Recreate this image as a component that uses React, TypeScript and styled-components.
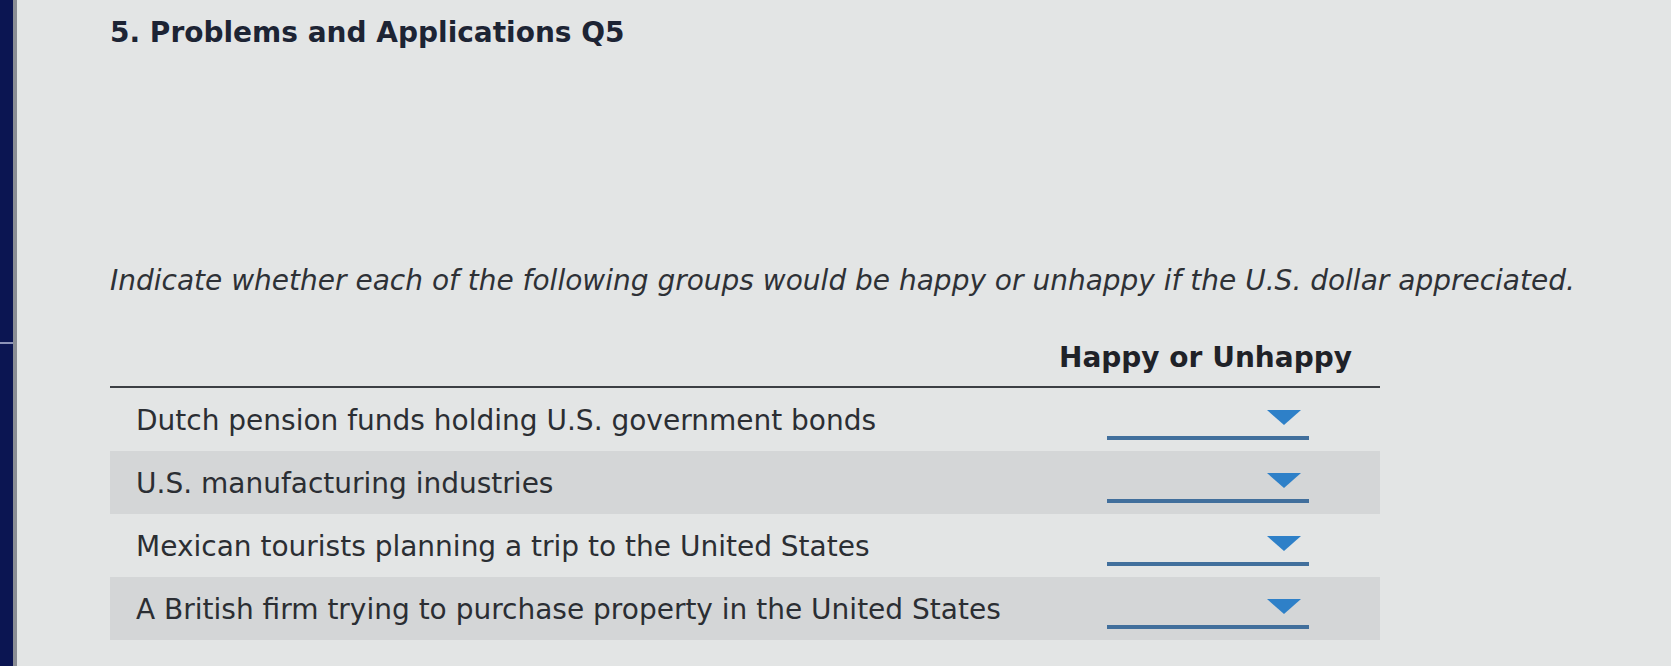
import styled, { createGlobalStyle } from "styled-components"

const GlobalStyle = createGlobalStyle`
  html, body {
    margin: 0;
    padding: 0;
    background: #e3e5e5;
  }
  body {
    font-family: "DejaVu Sans", Verdana, sans-serif;
    color: #2b2e33;
  }
`

const groups = [
  "Dutch pension funds holding U.S. government bonds",
  "U.S. manufacturing industries",
  "Mexican tourists planning a trip to the United States",
  "A British firm trying to purchase property in the United States",
]

const Arrow = () => (
  <svg width="34" height="15" viewBox="0 0 34 15">
    <polygon points="0,0 34,0 17,15" fill="#2e80c8" />
  </svg>
)

export const App = () => {
  return (
    <Page>
      <GlobalStyle />
      <SideBar />
      <Main>
        <Title>5. Problems and Applications Q5</Title>
        <Prompt>
          Indicate whether each of the following groups would be happy or unhappy if the U.S. dollar appreciated.
        </Prompt>
        <Table>
          <HeaderRow>
            <HeaderLabel>Happy or Unhappy</HeaderLabel>
          </HeaderRow>
          {groups.map((g, idx) => (
            <Row key={idx} shaded={idx % 2 === 1}>
              <RowLabel>{g}</RowLabel>
              <Dropdown>
                <ArrowWrap>
                  <Arrow />
                </ArrowWrap>
                <Underline />
              </Dropdown>
            </Row>
          ))}
        </Table>
      </Main>
    </Page>
  )
}
export default App

const Page = styled.div`
  display: flex;
  width: 100%;
  min-height: 666px;
  background: #e3e5e5;
`
const SideBar = styled.div`
  position: relative;
  width: 13px;
  flex-shrink: 0;
  background: #0b1552;
  border-right: 4px solid #8a8d94;

  &::after {
    content: "";
    position: absolute;
    left: 0;
    top: 342px;
    width: 13px;
    height: 2px;
    background: #8d93b8;
  }
`
const Main = styled.div`
  display: flex;
  flex-direction: column;
  padding: 16px 0 0 93px;
`
const Title = styled.h1`
  margin: 0;
  font-size: 28px;
  line-height: 34px;
  font-weight: bold;
  color: #1d2434;
`
const Prompt = styled.p`
  margin: 214px 0 0;
  font-size: 28px;
  line-height: 34px;
  font-style: italic;
  color: #2e3136;
`
const Table = styled.div`
  display: flex;
  flex-direction: column;
  width: 1270px;
  margin-top: 28px;
`
const HeaderRow = styled.div`
  display: flex;
  justify-content: flex-end;
  align-items: flex-end;
  height: 62px;
  box-sizing: border-box;
  padding: 0 28px 11px 0;
  border-bottom: 2px solid #3c3f44;
`
const HeaderLabel = styled.div`
  font-size: 28px;
  line-height: 34px;
  font-weight: bold;
  color: #1f2228;
`
const Row = styled.div<{ shaded?: boolean }>`
  display: grid;
  grid-template-columns: 1fr 202px;
  align-items: center;
  height: 63px;
  box-sizing: border-box;
  padding: 2px 71px 0 26px;
  background: ${p => (p.shaded ? "#d4d6d7" : "transparent")};
`
const RowLabel = styled.div`
  font-size: 28px;
  line-height: 34px;
  color: #2b2e33;
`
const Dropdown = styled.div`
  display: flex;
  flex-direction: column;
  align-items: flex-end;
  justify-content: flex-end;
  height: 100%;
  padding-bottom: 11px;
  box-sizing: border-box;
`
const ArrowWrap = styled.div`
  display: flex;
  margin: 0 8px 11px 0;
`
const Underline = styled.div`
  width: 202px;
  height: 4px;
  background: #416f9c;
`
